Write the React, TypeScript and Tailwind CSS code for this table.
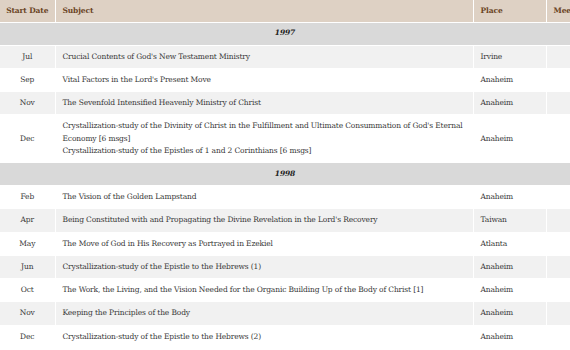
import React from 'react';

type Row = { month: string; subject: string[]; place: string };
type Year = { year: string; rows: Row[] };

const data: Year[] = [
  {
    year: '1997',
    rows: [
      { month: 'Jul', subject: ["Crucial Contents of God's New Testament Ministry"], place: 'Irvine' },
      { month: 'Sep', subject: ["Vital Factors in the Lord's Present Move"], place: 'Anaheim' },
      { month: 'Nov', subject: ['The Sevenfold Intensified Heavenly Ministry of Christ'], place: 'Anaheim' },
      {
        month: 'Dec',
        subject: [
          "Crystallization-study of the Divinity of Christ in the Fulfillment and Ultimate Consummation of God's Eternal Economy [6 msgs]",
          'Crystallization-study of the Epistles of 1 and 2 Corinthians [6 msgs]',
        ],
        place: 'Anaheim',
      },
    ],
  },
  {
    year: '1998',
    rows: [
      { month: 'Feb', subject: ['The Vision of the Golden Lampstand'], place: 'Anaheim' },
      { month: 'Apr', subject: ["Being Constituted with and Propagating the Divine Revelation in the Lord's Recovery"], place: 'Taiwan' },
      { month: 'May', subject: ['The Move of God in His Recovery as Portrayed in Ezekiel'], place: 'Atlanta' },
      { month: 'Jun', subject: ['Crystallization-study of the Epistle to the Hebrews (1)'], place: 'Anaheim' },
      { month: 'Oct', subject: ['The Work, the Living, and the Vision Needed for the Organic Building Up of the Body of Christ [1]'], place: 'Anaheim' },
      { month: 'Nov', subject: ['Keeping the Principles of the Body'], place: 'Anaheim' },
      { month: 'Dec', subject: ['Crystallization-study of the Epistle to the Hebrews (2)'], place: 'Anaheim' },
    ],
  },
];

const App: React.FC = () => {
  // stripe by position in the whole body, year rows included
  let index = 0;

  return (
    <div className="w-[570px] h-[350px] overflow-hidden bg-white">
      <table
        className="table-fixed border-collapse w-[570px] text-[7.5px] tracking-[-0.13px] leading-[12.25px] text-[#383838]"
        style={{ fontFamily: '"DejaVu Serif", serif' }}
      >
        <colgroup>
          <col className="w-[55px]" />
          <col className="w-[418px]" />
          <col className="w-[73px]" />
          <col className="w-[24px]" />
        </colgroup>
        <thead>
          <tr className="bg-[#ded1c4] text-[#6b4526] h-[22px]">
            <th className="border-r border-b border-white px-[4px] text-center font-bold whitespace-nowrap">Start Date</th>
            <th className="border-r border-b border-white px-[7px] text-left font-bold">Subject</th>
            <th className="border-r border-b border-white px-[7px] text-left font-bold">Place</th>
            <th className="border-b border-white pl-[7px] text-left font-bold whitespace-nowrap overflow-hidden">Meeting</th>
          </tr>
        </thead>
        <tbody>
          {data.map((y) => {
            index++;
            return (
              <React.Fragment key={y.year}>
                <tr className="bg-[#d9d9d9] h-[23px]">
                  <td colSpan={4} className="border-b border-white text-center font-bold italic text-[#222]">
                    {y.year}
                  </td>
                </tr>
                {y.rows.map((r) => {
                  index++;
                  const bg = index % 2 === 0 ? 'bg-[#f1f1f1]' : 'bg-white';
                  return (
                    <tr key={y.year + r.month} className={bg}>
                      <td className="border-r border-b border-white py-[5px] text-center">{r.month}</td>
                      <td className="border-r border-b border-white py-[5px] px-[7px]">
                        {r.subject.map((s) => (
                          <div key={s}>{s}</div>
                        ))}
                      </td>
                      <td className="border-r border-b border-white py-[5px] px-[7px]">{r.place}</td>
                      <td className="border-b border-white py-[5px]"></td>
                    </tr>
                  );
                })}
              </React.Fragment>
            );
          })}
        </tbody>
      </table>
    </div>
  );
};

export default App;
